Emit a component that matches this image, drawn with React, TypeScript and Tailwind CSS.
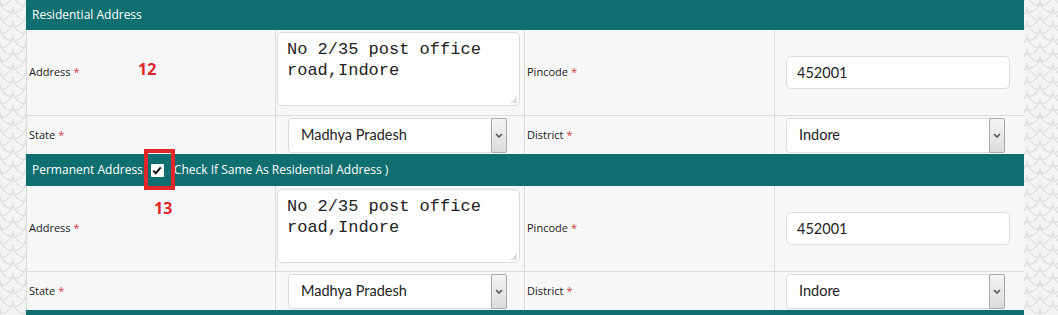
import React from 'react';

const SANS = "font-['Open_Sans','Noto_Sans',sans-serif]";
const FIELD = "font-['Lato','Open_Sans',sans-serif]";

function Req() {
  return <span className="ml-[3px] text-[#d23a3a]">*</span>;
}

function Label({ text }: { text: string }) {
  return (
    <div className={`flex items-center pl-[2px] text-[11px] text-[#1a1a1a] ${SANS}`}>
      {text}
      <Req />
    </div>
  );
}

function Chevron() {
  return (
    <svg width="8" height="5" viewBox="0 0 8 5" className="text-[#555]">
      <path d="M1 1 L4 4 L7 1" fill="none" stroke="currentColor" strokeWidth="1.6" />
    </svg>
  );
}

function FakeSelect({ value }: { value: string }) {
  return (
    <div
      className={`flex h-[35px] w-[219px] items-center justify-between rounded-[4px] border border-[#d8dde0] bg-white pl-[12px] text-[14.5px] text-[#222] ${FIELD}`}
    >
      <span>{value}</span>
      <div className="mr-[-1px] flex h-[35px] w-[16px] items-center justify-center rounded-[2px] border border-[#a9a9a9] bg-[linear-gradient(#f4f4f4,#dcdcdc)]">
        <Chevron />
      </div>
    </div>
  );
}

function AddressArea() {
  return (
    <div className="relative h-[74px] w-[243px] rounded-[5px] border border-[#d8dde0] bg-white px-[9px] pt-[6px] font-['Liberation_Mono','Courier_New',monospace] text-[17px] leading-[21px] text-[#222]">
      No 2/35 post office
      <br />
      road,Indore
      <svg width="7" height="7" viewBox="0 0 7 7" className="absolute bottom-[2px] right-[2px]">
        <circle cx="6" cy="2" r="0.7" fill="#aaa" />
        <circle cx="4" cy="4" r="0.7" fill="#aaa" />
        <circle cx="6" cy="4" r="0.7" fill="#aaa" />
        <circle cx="2" cy="6" r="0.7" fill="#aaa" />
        <circle cx="4" cy="6" r="0.7" fill="#aaa" />
        <circle cx="6" cy="6" r="0.7" fill="#aaa" />
      </svg>
    </div>
  );
}

function AddressBlock({ top }: { top: string }) {
  return (
    <>
      <div className="grid h-[86px] grid-cols-[250px_249px_250px_249px] border-b border-[#dcdcdc]">
        <div className="flex border-r border-l border-[#dcdcdc]">
          <Label text="Address" />
        </div>
        <div className={`border-r border-[#dcdcdc] pl-[1px] ${top}`}>
          <AddressArea />
        </div>
        <div className="flex border-r border-[#dcdcdc]">
          <Label text="Pincode" />
        </div>
        <div className="flex items-center pl-[11px]">
          <div
            className={`flex h-[33px] w-[224px] items-center rounded-[5px] border border-[#d8dde0] bg-white pl-[10px] text-[14.5px] text-[#222] ${FIELD}`}
          >
            452001
          </div>
        </div>
      </div>
      <div className="grid h-[38px] grid-cols-[250px_249px_250px_249px]">
        <div className="flex border-r border-l border-[#dcdcdc]">
          <Label text="State" />
        </div>
        <div className="flex items-center border-r border-[#dcdcdc] pl-[12px]">
          <FakeSelect value="Madhya Pradesh" />
        </div>
        <div className="flex border-r border-[#dcdcdc]">
          <Label text="District" />
        </div>
        <div className="flex items-center pl-[11px]">
          <FakeSelect value="Indore" />
        </div>
      </div>
    </>
  );
}

export default function App() {
  return (
    <div className="relative h-[315px] w-[1058px] overflow-hidden bg-[#f4f4f4] bg-[image:radial-gradient(circle_at_50%_0%,transparent_0_12px,#e3e3e3_12px_13.5px,transparent_13.5px),radial-gradient(circle_at_50%_0%,transparent_0_12px,#e3e3e3_12px_13.5px,transparent_13.5px)] bg-[length:26px_14px] bg-[position:0_0,13px_7px]">
      <div className="ml-[26px] w-[998px] bg-[#f7f7f7]">
        <div className={`flex h-[30px] items-center bg-[#0f6f70] pl-[6px] text-[12px] text-white ${SANS}`}>
          Residential Address
        </div>
        <AddressBlock top="pt-[2px]" />
        <div className={`flex h-[32px] items-center bg-[#0f6f70] pl-[6px] text-[12px] text-white ${SANS}`}>
          <span>Permanent Address</span>
          <span className="ml-[8px] mr-[10px] flex h-[13px] w-[13px] items-center justify-center rounded-[1px] bg-white">
            <svg width="10" height="9" viewBox="0 0 10 9">
              <path d="M1.2 4.6 L3.8 7.2 L8.8 1.4" fill="none" stroke="#111" strokeWidth="2" />
            </svg>
          </span>
          <span>Check If Same As Residential Address )</span>
        </div>
        <AddressBlock top="pt-[3px]" />
        <div className="h-[10px] bg-[#0f6f70]" />
      </div>

      <div className="pointer-events-none absolute left-[144px] top-[149px] h-[41px] w-[31px] border-[4px] border-[#e0262a]" />
      <div className={`absolute left-[138px] top-[57px] text-[16px] font-bold text-[#e0262a] ${SANS}`}>12</div>
      <div className={`absolute left-[154px] top-[196px] text-[16px] font-bold text-[#e0262a] ${SANS}`}>13</div>
    </div>
  );
}
